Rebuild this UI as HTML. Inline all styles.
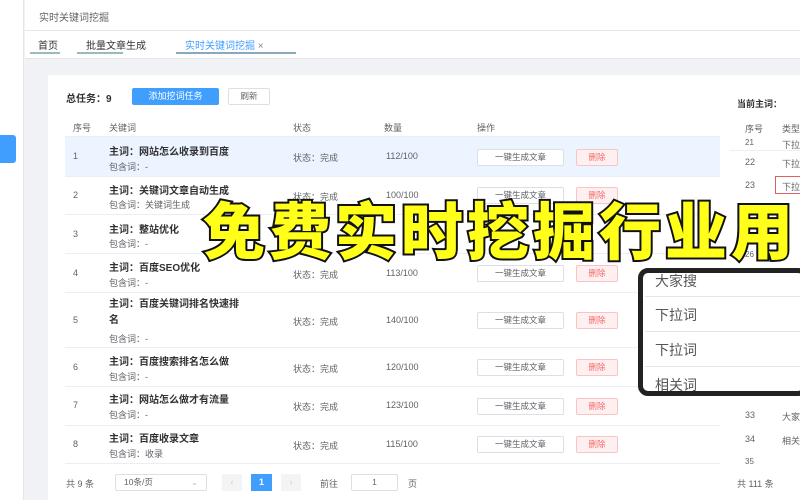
<!DOCTYPE html><html><head><meta charset="utf-8"><style>
*{margin:0;padding:0;box-sizing:border-box}
body{width:800px;height:500px;overflow:hidden;position:relative;background:#f0f2f5;font-family:"Liberation Sans","Noto Sans CJK SC",sans-serif;font-size:9px;color:#606266}
.a{position:absolute}
.btn{position:absolute;border:1px solid #dcdfe6;background:#fff;border-radius:2px;text-align:center;font-size:8.5px;line-height:15px;height:17px}
.del{position:absolute;border:1px solid #fbc4c4;background:#fef0f0;color:#f56c6c;border-radius:2px;text-align:center;font-size:8.5px;line-height:15px;height:17px;width:42px}
.rl{position:absolute;left:65px;width:655px;border-bottom:1px solid #ebeef5}
.mw{color:#303133;font-weight:bold;font-size:10px}
</style></head><body>
<div class="a" style="left:0;top:0;width:24px;height:500px;background:#fff;border-right:1px solid #e6e6e6"></div>
<div class="a" style="left:0;top:135px;width:16px;height:28px;background:#409eff;border-radius:0 3px 3px 0"></div>
<div class="a" style="left:25px;top:0;width:775px;height:31px;background:#fff;border-bottom:1px solid #e6e6e6"></div>
<div class="a" style="left:39px;top:9px;font-size:10px;color:#606266">实时关键词挖掘</div>
<div class="a" style="left:25px;top:31px;width:775px;height:28px;background:#fff;border-bottom:1px solid #e6e6e6"></div>
<div class="a" style="left:38px;top:37px;font-size:10px;color:#333">首页</div>
<div class="a" style="left:30px;top:52px;width:30px;border-bottom:2px solid #9bb"></div>
<div class="a" style="left:86px;top:37px;font-size:10px;color:#333">批量文章生成</div>
<div class="a" style="left:77px;top:52px;width:46px;border-bottom:2px solid #9bb"></div>
<div class="a" style="left:185px;top:37px;font-size:10px;color:#409eff">实时关键词挖掘 <span style="color:#888">×</span></div>
<div class="a" style="left:176px;top:52px;width:120px;border-bottom:2px solid #8ab"></div>
<div class="a" style="left:48px;top:75px;width:680px;height:425px;background:#fff"></div>
<div class="a" style="left:722px;top:75px;width:78px;height:425px;background:#fff"></div>
<div class="a" style="left:66px;top:90px;font-size:10px;font-weight:bold;color:#303133">总任务：9</div>
<div class="a" style="left:132px;top:88px;width:87px;height:17px;background:#409eff;border-radius:2px;color:#fff;text-align:center;line-height:17px;font-size:9px">添加挖词任务</div>
<div class="btn" style="left:228px;top:88px;width:42px">刷新</div>
<div class="a" style="left:73px;top:121px">序号</div><div class="a" style="left:109px;top:121px">关键词</div><div class="a" style="left:293px;top:121px">状态</div><div class="a" style="left:384px;top:121px">数量</div><div class="a" style="left:477px;top:121px">操作</div>
<div class="a" style="left:65px;top:137px;width:655px;height:39px;background:#ecf5ff"></div>
<div class="rl" style="top:136px"></div>
<div class="rl" style="top:176px"></div><div class="rl" style="top:214px"></div><div class="rl" style="top:253px"></div><div class="rl" style="top:292px"></div><div class="rl" style="top:347px"></div><div class="rl" style="top:386px"></div><div class="rl" style="top:425px"></div><div class="rl" style="top:463px"></div>
<div class="a" style="left:73px;top:151px">1</div><div class="a mw" style="left:109px;top:143px">主词：网站怎么收录到百度</div><div class="a" style="left:109px;top:160px">包含词：-</div><div class="a" style="left:293px;top:151px">状态：完成</div><div class="a" style="left:386px;top:151px">112/100</div><div class="btn" style="left:477px;top:149px;width:87px">一键生成文章</div><div class="del" style="left:576px;top:149px">删除</div>
<div class="a" style="left:73px;top:190px">2</div><div class="a mw" style="left:109px;top:182px">主词：关键词文章自动生成</div><div class="a" style="left:109px;top:198px">包含词：关键词生成</div><div class="a" style="left:293px;top:190px">状态：完成</div><div class="a" style="left:386px;top:190px">100/100</div><div class="btn" style="left:477px;top:187px;width:87px">一键生成文章</div><div class="del" style="left:576px;top:187px">删除</div>
<div class="a" style="left:73px;top:229px">3</div><div class="a mw" style="left:109px;top:221px">主词：整站优化</div><div class="a" style="left:109px;top:237px">包含词：-</div>
<div class="a" style="left:73px;top:268px">4</div><div class="a mw" style="left:109px;top:259px">主词：百度SEO优化</div><div class="a" style="left:109px;top:276px">包含词：-</div><div class="a" style="left:293px;top:268px">状态：完成</div><div class="a" style="left:386px;top:268px">113/100</div><div class="btn" style="left:477px;top:265px;width:87px">一键生成文章</div><div class="del" style="left:576px;top:265px">删除</div>
<div class="a" style="left:73px;top:315px">5</div><div class="a mw" style="left:109px;top:297px;width:132px;line-height:16px;word-break:break-all">主词：百度关键词排名快速排名</div><div class="a" style="left:109px;top:332px">包含词：-</div><div class="a" style="left:293px;top:315px">状态：完成</div><div class="a" style="left:386px;top:315px">140/100</div><div class="btn" style="left:477px;top:312px;width:87px">一键生成文章</div><div class="del" style="left:576px;top:312px">删除</div>
<div class="a" style="left:73px;top:362px">6</div><div class="a mw" style="left:109px;top:353px">主词：百度搜索排名怎么做</div><div class="a" style="left:109px;top:370px">包含词：-</div><div class="a" style="left:293px;top:362px">状态：完成</div><div class="a" style="left:386px;top:362px">120/100</div><div class="btn" style="left:477px;top:359px;width:87px">一键生成文章</div><div class="del" style="left:576px;top:359px">删除</div>
<div class="a" style="left:73px;top:400px">7</div><div class="a mw" style="left:109px;top:391px">主词：网站怎么做才有流量</div><div class="a" style="left:109px;top:408px">包含词：-</div><div class="a" style="left:293px;top:400px">状态：完成</div><div class="a" style="left:386px;top:400px">123/100</div><div class="btn" style="left:477px;top:398px;width:87px">一键生成文章</div><div class="del" style="left:576px;top:398px">删除</div>
<div class="a" style="left:73px;top:439px">8</div><div class="a mw" style="left:109px;top:430px">主词：百度收录文章</div><div class="a" style="left:109px;top:447px">包含词：收录</div><div class="a" style="left:293px;top:439px">状态：完成</div><div class="a" style="left:386px;top:439px">115/100</div><div class="btn" style="left:477px;top:436px;width:87px">一键生成文章</div><div class="del" style="left:576px;top:436px">删除</div>
<div class="a" style="left:66px;top:477px">共 9 条</div>
<div class="btn" style="left:115px;top:474px;width:92px;text-align:left;padding-left:8px">10条/页 <span style="float:right;margin-right:8px;color:#bbb">⌄</span></div>
<div class="a" style="left:222px;top:474px;width:20px;height:17px;background:#f4f4f5;color:#ccc;text-align:center;line-height:17px">‹</div>
<div class="a" style="left:251px;top:474px;width:21px;height:17px;background:#409eff;color:#fff;text-align:center;line-height:17px;font-weight:bold">1</div>
<div class="a" style="left:281px;top:474px;width:20px;height:17px;background:#f4f4f5;color:#ccc;text-align:center;line-height:17px">›</div>
<div class="a" style="left:320px;top:477px">前往</div>
<div class="btn" style="left:351px;top:474px;width:47px">1</div><div class="a" style="left:408px;top:477px">页</div>
<div class="a" style="left:737px;top:97px;font-weight:bold;color:#303133">当前主词：</div>
<div class="a" style="left:745px;top:122px">序号</div><div class="a" style="left:782px;top:122px">类型</div>
<div class="a" style="left:745px;top:138px;font-size:8px">21</div><div class="a" style="left:782px;top:138px">下拉</div>
<div class="a" style="left:730px;top:150px;width:70px;border-bottom:1px solid #ebeef5"></div>
<div class="a" style="left:745px;top:157px">22</div><div class="a" style="left:782px;top:157px">下拉</div>
<div class="a" style="left:745px;top:180px">23</div><div class="a" style="left:775px;top:176px;width:30px;height:18px;border:1px solid #e06060;padding:3px 0 0 6px">下拉</div>
<div class="a" style="left:745px;top:250px;font-size:8px">26</div>
<div class="a" style="left:745px;top:410px">33</div><div class="a" style="left:782px;top:410px">大家</div>
<div class="a" style="left:745px;top:434px">34</div><div class="a" style="left:782px;top:434px">相关</div>
<div class="a" style="left:745px;top:457px;font-size:8px">35</div>
<div class="a" style="left:737px;top:477px">共 111 条</div>
<div class="a" style="left:638px;top:268px;width:170px;height:128px;background:#fff;border:5px solid #222;border-radius:10px"></div>
<div class="a" style="left:655px;top:271px;font-size:14px;color:#555">大家搜</div>
<div class="a" style="left:655px;top:305px;font-size:14px;color:#555">下拉词</div>
<div class="a" style="left:655px;top:340px;font-size:14px;color:#555">下拉词</div>
<div class="a" style="left:655px;top:375px;font-size:14px;color:#555">相关词</div>
<div class="a" style="left:645px;top:296px;width:160px;border-bottom:1px solid #e5e5e5"></div>
<div class="a" style="left:645px;top:331px;width:160px;border-bottom:1px solid #e5e5e5"></div>
<div class="a" style="left:645px;top:366px;width:160px;border-bottom:1px solid #e5e5e5"></div>
<div class="a" style="left:203px;top:192px;white-space:nowrap;font-family:'Noto Sans CJK SC',sans-serif;font-weight:900;font-size:62px;line-height:70px;color:#ffff1a;-webkit-text-stroke:4px #111;paint-order:stroke fill;letter-spacing:4px">免费实时挖掘行业用</div>
</body></html>
